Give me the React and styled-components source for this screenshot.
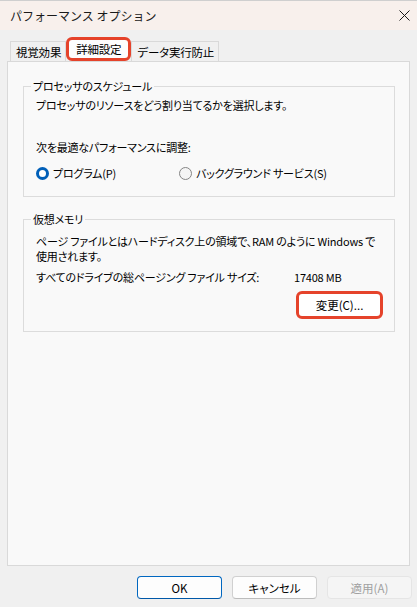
import React from "react";
import styled, { createGlobalStyle } from "styled-components";

const Global = createGlobalStyle`
  html, body { margin: 0; padding: 0; background: #f0f0f0; }
  body {
    font-family: "Noto Sans CJK JP", "Noto Sans", sans-serif;
    font-size: 11px;
    letter-spacing: -0.2px;
    color: #000;
    font-feature-settings: "palt" 1;
  }
  * { box-sizing: border-box; }
`;

const Window = styled.div`
  width: 417px;
  height: 607px;
  display: flex;
  flex-direction: column;
  background: #f0f0f0;
  overflow: hidden;
`;

const TitleBar = styled.div`
  height: 30px;
  flex: none;
  display: flex;
  align-items: center;
  justify-content: space-between;
  padding: 0 1px 0 10px;
  background: #f8f0ec;
  border-top: 1px solid #cfcfcf;
`;

const Title = styled.span`
  font-size: 12px;
  line-height: 16px;
  letter-spacing: 0;
  font-feature-settings: normal;
  color: #1a1a1a;
`;

const CloseBtn = styled.span`
  width: 24px;
  height: 24px;
  display: flex;
  align-items: center;
  justify-content: center;
`;

const Body = styled.div`
  flex: 1;
  display: flex;
  flex-direction: column;
  padding: 7px 7px 0 7px;
  min-height: 0;
`;

const TabRow = styled.div`
  display: flex;
  align-items: flex-end;
  height: 24px;
  padding-left: 3px;
`;

const Tab = styled.div`
  height: ${(p) => (p.$active ? "24px" : "20px")};
  padding: ${(p) => (p.$active ? "0 7px" : "1px 4px 0 5px")};
  display: flex;
  align-items: center;
  line-height: 16px;
  font-size: 11.5px;
  background: ${(p) => (p.$active ? "#fdfdfd" : "#f0f0f0")};
  border: ${(p) => (p.$active ? "3px solid #e5432b" : "1px solid #d9d9d9")};
  border-bottom: ${(p) => (p.$active ? "3px solid #e5432b" : "none")};
  border-radius: ${(p) => (p.$active ? "6px" : "0")};
  position: relative;
  z-index: ${(p) => (p.$active ? 1 : 0)};
`;

const Panel = styled.div`
  flex: 1;
  background: #f9f9f9;
  border: 1px solid #d9d9d9;
  padding: 16px 14px 0 15px;
  display: flex;
  flex-direction: column;
`;

const Group = styled.fieldset`
  margin: ${(p) => (p.$first ? "0" : "14px 0 0 0")};
  padding: 0 12px ${(p) => p.$pb || 15}px 12px;
  border: 1px solid #dcdcdc;
  min-width: 0;
`;

const Legend = styled.legend`
  padding: 0 2px;
  margin-left: -5px;
  line-height: 16px;
  font-size: 11px;
`;

const Line = styled.div`
  line-height: ${(p) => p.$lh || 16}px;
  margin-top: ${(p) => p.$mt || 0}px;
  white-space: nowrap;
`;

const RadioRow = styled.div`
  display: grid;
  grid-template-columns: 143px auto;
  margin-top: 10px;
  height: 16px;
  align-items: center;
`;

const RadioItem = styled.label`
  display: flex;
  align-items: center;
  gap: 4px;
  line-height: 16px;
`;

const RadioDot = styled.span`
  width: 13px;
  height: 13px;
  border-radius: 50%;
  flex: none;
  background: ${(p) => (p.$checked ? "#fff" : "#f5f5f5")};
  border: ${(p) => (p.$checked ? "3.5px solid #005fb8" : "1px solid #858585")};
`;

const SizeRow = styled.div`
  display: grid;
  grid-template-columns: 258px auto;
  line-height: 16px;
  margin-top: 5px;
`;

const ButtonRow = styled.div`
  display: flex;
  justify-content: flex-end;
  margin-top: 6px;
  margin-right: -1px;
`;

const ChangeButton = styled.button`
  width: 87px;
  height: 28px;
  border: 3px solid #e5432b;
  border-radius: 6px;
  background: #fff;
  font: inherit;
  font-size: 11.5px;
  color: #000;
  padding: 0;
  line-height: 16px;
`;

const Footer = styled.div`
  flex: none;
  display: flex;
  justify-content: flex-end;
  gap: 10px;
  padding: 10px 5px 8px 0;
`;

const DlgButton = styled.button`
  width: 85px;
  height: 23px;
  border-radius: 4px;
  font: inherit;
  font-size: 11.5px;
  padding: 0;
  line-height: 16px;
  background: ${(p) => (p.$disabled ? "#f5f5f5" : "#fdfdfd")};
  color: ${(p) => (p.$disabled ? "#a0a0a0" : "#000")};
  border: 1px solid
    ${(p) => (p.$primary ? "#0067c0" : p.$disabled ? "#e5e5e5" : "#d0d0d0")};
  border-bottom-color: ${(p) =>
    p.$primary ? "#0058a8" : p.$disabled ? "#e5e5e5" : "#bcbcbc"};
`;

export default function App() {
  return (
    <Window>
      <Global />
      <TitleBar>
        <Title>パフォーマンス オプション</Title>
        <CloseBtn>
          <svg width="11" height="11" viewBox="0 0 11 11">
            <path d="M0.5 0.5 L10.5 10.5 M10.5 0.5 L0.5 10.5" stroke="#1a1a1a" strokeWidth="1" />
          </svg>
        </CloseBtn>
      </TitleBar>
      <Body>
        <TabRow>
          <Tab>視覚効果</Tab>
          <Tab $active>詳細設定</Tab>
          <Tab>データ実行防止</Tab>
        </TabRow>
        <Panel>
          <Group $first>
            <Legend>プロセッサのスケジュール</Legend>
            <Line $mt={3}>プロセッサのリソースをどう割り当てるかを選択します。</Line>
            <Line $mt={26}>次を最適なパフォーマンスに調整:</Line>
            <RadioRow>
              <RadioItem>
                <RadioDot $checked />
                プログラム(P)
              </RadioItem>
              <RadioItem>
                <RadioDot />
                バックグラウンド サービス(S)
              </RadioItem>
            </RadioRow>
          </Group>
          <Group $pb={12}>
            <Legend>仮想メモリ</Legend>
            <Line $mt={7} $lh={15}>
              ページ ファイルとはハードディスク上の領域で、RAM のように Windows で
            </Line>
            <Line $lh={15}>使用されます。</Line>
            <SizeRow>
              <span>すべてのドライブの総ページング ファイル サイズ:</span>
              <span>17408 MB</span>
            </SizeRow>
            <ButtonRow>
              <ChangeButton>変更(C)...</ChangeButton>
            </ButtonRow>
          </Group>
        </Panel>
      </Body>
      <Footer>
        <DlgButton $primary>OK</DlgButton>
        <DlgButton>キャンセル</DlgButton>
        <DlgButton $disabled>適用(A)</DlgButton>
      </Footer>
    </Window>
  );
}
